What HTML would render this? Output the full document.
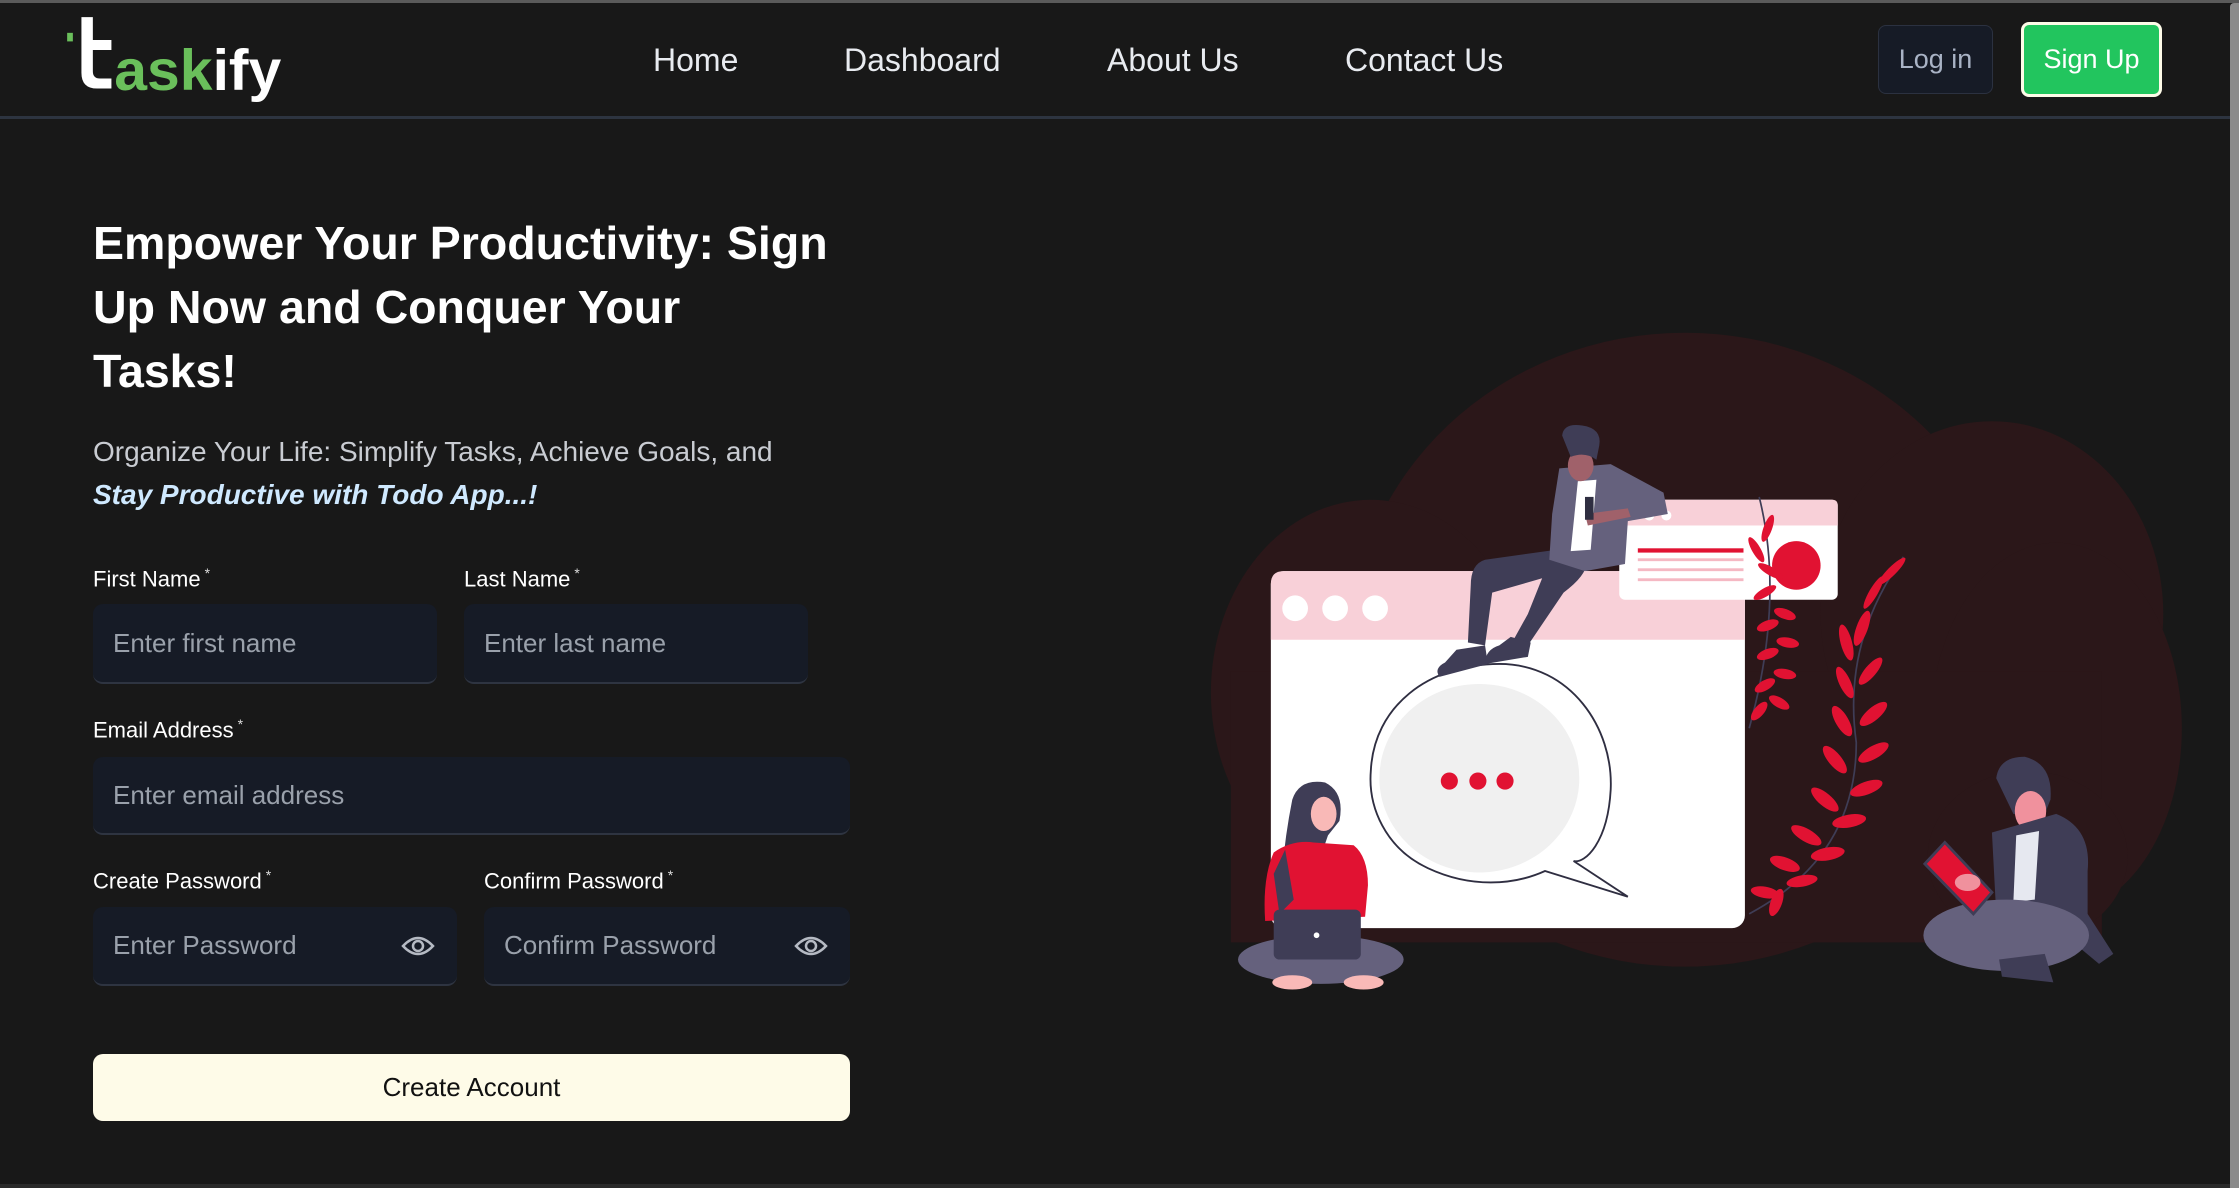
<!DOCTYPE html>
<html><head><meta charset="utf-8"><style>
*{margin:0;padding:0;box-sizing:border-box}
body{width:2239px;height:1188px;background:#181818;position:relative;overflow:hidden;font-family:"Liberation Sans",sans-serif;color:#fff}
.a{position:absolute}
.topline{left:0;top:0;width:2239px;height:3px;background:#5a5a5a}
.navb{left:0;top:116px;width:2230px;height:3px;background:#2d3440}
.sb{left:2230px;top:3px;width:9px;height:1185px;background:#8a8a8a;border-radius:4px 0 0 0}
.nav{top:42px;font-size:32px;color:#e8ebf0}
.btn{border-radius:8px;font-size:27px;display:flex;align-items:center;justify-content:center}
h1{position:absolute;left:93px;top:211px;font-size:46.5px;line-height:64px;font-weight:700;width:800px}
.sub{left:93px;top:430px;font-size:28px;line-height:43px;color:#c9ccd2}
.sub b{font-style:italic;color:#cfe9ff}
.lbl{font-size:22px;color:#fff}
.lbl sup{font-size:14px;color:#ddd;margin-left:4px}
.inp{background:#161b26;border-radius:10px;border-bottom:2px solid #2e3441;font-size:26px;color:#9aa1ab;padding-left:20px;display:flex;align-items:center}
.eye{position:absolute;right:22px;top:50%;margin-top:-15px}
</style></head><body>
<div class="a topline"></div>
<div class="a navb"></div>
<div class="a sb"></div>

<svg class="a" style="left:0;top:0" width="2239" height="1188" viewBox="0 0 1568 832">
<!-- logo -->
<rect x="47" y="23" width="4" height="6" fill="#6abf5b"/>
<path d="M57 12 H65 V28 H78 V35 H65 V50 Q65 55 70 55 H78 V62 H68 Q57 62 57 51 Z" fill="#fff"/>
<text x="80" y="63" font-family="Liberation Sans" font-weight="700" font-size="40" textLength="117" lengthAdjust="spacingAndGlyphs" fill="#6abf5b">ask<tspan fill="#fff">ify</tspan></text>

<!-- blob -->
<g fill="#2b1719">
<ellipse cx="1180" cy="455" rx="235" ry="222"/>
<ellipse cx="1395" cy="430" rx="120" ry="135"/>
<ellipse cx="1440" cy="510" rx="88" ry="130"/>
<ellipse cx="960" cy="485" rx="112" ry="135"/>
<rect x="862" y="470" width="610" height="190"/>
<ellipse cx="1420" cy="600" rx="70" ry="60"/>
</g>
<!-- main window -->
<rect x="890" y="400" width="332" height="250" rx="9" fill="#fff"/>
<path d="M899 400 H1213 Q1222 400 1222 409 V448 H890 V409 Q890 400 899 400Z" fill="#f8d0d8"/>
<circle cx="907" cy="426" r="9" fill="#fff"/><circle cx="935" cy="426" r="9" fill="#fff"/><circle cx="963" cy="426" r="9" fill="#fff"/>
<!-- small window -->
<rect x="1134" y="350" width="153" height="70" rx="4" fill="#fff"/>
<path d="M1138 350 H1283 Q1287 350 1287 354 V368 H1134 V354 Q1134 350 1138 350Z" fill="#f8d0d8"/>
<circle cx="1143" cy="361" r="3.5" fill="#fff"/><circle cx="1155" cy="361" r="3.5" fill="#fff"/><circle cx="1167" cy="361" r="3.5" fill="#fff"/>
<rect x="1147" y="384" width="74" height="3" fill="#e11232"/>
<rect x="1147" y="391" width="74" height="2" fill="#f5b8c3"/>
<rect x="1147" y="398" width="74" height="2" fill="#f5b8c3"/>
<rect x="1147" y="405" width="74" height="2" fill="#f5b8c3"/>
<circle cx="1258" cy="396" r="17" fill="#e11232"/>
<!-- bubble -->
<path d="M1050 465 C1100 465 1130 510 1128 553 C1126 590 1110 605 1102 603 L1140 628 L1082 610 C1060 620 1030 622 1000 608 C970 594 958 565 960 540 C962 495 1000 465 1050 465Z" fill="#fff" stroke="#2f2e41" stroke-width="1.3"/>
<ellipse cx="1036" cy="545" rx="70" ry="66" fill="#f0f0f0"/>
<circle cx="1015" cy="547" r="6" fill="#e11232"/><circle cx="1035" cy="547" r="6" fill="#e11232"/><circle cx="1054" cy="547" r="6" fill="#e11232"/>
<!-- vines -->
<g stroke="#3f3d56" stroke-width="1.2" fill="none">
<path d="M1232 348 Q1250 420 1225 510"/>
<path d="M1333 390 Q1290 450 1300 520 Q1300 600 1225 640"/>
</g>
<g fill="#e11232">
<ellipse cx="1238" cy="370" rx="3" ry="10" transform="rotate(20 1238 370)"/>
<ellipse cx="1230" cy="385" rx="3" ry="10" transform="rotate(-30 1230 385)"/>
<ellipse cx="1240" cy="400" rx="3" ry="10" transform="rotate(-60 1240 400)"/>
<ellipse cx="1236" cy="415" rx="3" ry="9" transform="rotate(60 1236 415)"/>
<ellipse cx="1250" cy="430" rx="3.5" ry="8" transform="rotate(-70 1250 430)"/>
<ellipse cx="1238" cy="438" rx="3.5" ry="8" transform="rotate(70 1238 438)"/>
<ellipse cx="1252" cy="450" rx="3.5" ry="8" transform="rotate(-80 1252 450)"/>
<ellipse cx="1238" cy="458" rx="3.5" ry="8" transform="rotate(70 1238 458)"/>
<ellipse cx="1250" cy="472" rx="3.5" ry="8" transform="rotate(-80 1250 472)"/>
<ellipse cx="1236" cy="480" rx="3.5" ry="8" transform="rotate(60 1236 480)"/>
<ellipse cx="1246" cy="492" rx="3.5" ry="8" transform="rotate(-60 1246 492)"/>
<ellipse cx="1232" cy="498" rx="3.5" ry="8" transform="rotate(40 1232 498)"/>
<ellipse cx="1325" cy="400" rx="3" ry="13" transform="rotate(45 1325 400)"/>
<ellipse cx="1312" cy="415" rx="3" ry="13" transform="rotate(30 1312 415)"/>
<ellipse cx="1304" cy="440" rx="4" ry="13" transform="rotate(20 1304 440)"/>
<ellipse cx="1293" cy="450" rx="4" ry="13" transform="rotate(-15 1293 450)"/>
<ellipse cx="1310" cy="470" rx="4" ry="12" transform="rotate(40 1310 470)"/>
<ellipse cx="1292" cy="478" rx="4" ry="12" transform="rotate(-25 1292 478)"/>
<ellipse cx="1312" cy="500" rx="4.5" ry="12" transform="rotate(50 1312 500)"/>
<ellipse cx="1290" cy="505" rx="4.5" ry="12" transform="rotate(-30 1290 505)"/>
<ellipse cx="1312" cy="527" rx="4.5" ry="12" transform="rotate(60 1312 527)"/>
<ellipse cx="1285" cy="532" rx="4.5" ry="12" transform="rotate(-40 1285 532)"/>
<ellipse cx="1307" cy="552" rx="4.5" ry="12" transform="rotate(70 1307 552)"/>
<ellipse cx="1278" cy="560" rx="4.5" ry="12" transform="rotate(-50 1278 560)"/>
<ellipse cx="1295" cy="575" rx="4.5" ry="12" transform="rotate(80 1295 575)"/>
<ellipse cx="1265" cy="585" rx="4.5" ry="12" transform="rotate(-60 1265 585)"/>
<ellipse cx="1280" cy="598" rx="4.5" ry="12" transform="rotate(80 1280 598)"/>
<ellipse cx="1250" cy="605" rx="4.5" ry="11" transform="rotate(-70 1250 605)"/>
<ellipse cx="1262" cy="617" rx="4" ry="11" transform="rotate(80 1262 617)"/>
<ellipse cx="1236" cy="625" rx="4" ry="10" transform="rotate(-80 1236 625)"/>
<ellipse cx="1244" cy="632" rx="4" ry="10" transform="rotate(20 1244 632)"/>
</g>
<!-- top man -->
<path d="M1090 385 L1040 392 Q1030 395 1030 410 L1028 450 L1040 452 L1045 415 L1080 405 L1070 430 L1060 448 L1070 452 L1095 415 Q1115 400 1110 390Z" fill="#3f3d56"/>
<path d="M1020 455 L1040 452 L1042 465 L1008 474 Q1004 468 1012 464Z" fill="#3f3d56"/>
<path d="M1058 446 L1072 450 L1070 460 L1040 465 Q1040 455 1050 452Z" fill="#3f3d56"/>
<path d="M1092 328 L1128 325 L1165 345 L1168 360 L1140 365 L1138 395 L1110 400 L1085 392 L1087 360Z" fill="#65617d"/>
<path d="M1105 337 L1118 336 L1114 385 L1100 386Z" fill="#fff"/>
<ellipse cx="1107" cy="326" rx="9" ry="11" fill="#a0616a"/>
<path d="M1094 305 Q1095 296 1108 298 Q1122 300 1120 312 L1118 322 Q1110 316 1100 320 Z" fill="#3f3d56"/>
<path d="M1110 360 L1140 356 L1142 362 L1112 368Z" fill="#a0616a"/>
<rect x="1110" y="348" width="6" height="16" fill="#2f2e41"/>
<!-- woman -->
<path d="M905 560 Q910 545 928 548 Q942 555 938 575 L930 585 L918 620 L905 628 L898 610 Q900 585 905 560Z" fill="#3f3d56"/>
<ellipse cx="927" cy="570" rx="9" ry="12" fill="#f9b9b7"/>
<path d="M892 597 Q905 588 920 590 L948 592 Q958 600 958 620 L956 642 L886 645 Q884 615 892 597Z" fill="#e11232"/>
<path d="M900 595 L906 630 L896 640 L892 612Z" fill="#3f3d56"/>
<ellipse cx="925" cy="672" rx="58" ry="17" fill="#65617d"/>
<ellipse cx="905" cy="688" rx="14" ry="5" fill="#f9b9b7"/><ellipse cx="955" cy="688" rx="14" ry="5" fill="#f9b9b7"/>
<rect x="892" y="637" width="61" height="35" rx="4" fill="#3f3d56"/>
<circle cx="922" cy="655" r="2" fill="#fff"/>
<!-- right man -->
<path d="M1398 545 Q1400 530 1418 530 Q1438 535 1436 560 L1430 575 L1410 570 Z" fill="#3f3d56"/>
<ellipse cx="1422" cy="568" rx="11" ry="14" fill="#f0919d"/>
<path d="M1395 583 L1440 570 Q1465 580 1462 610 L1462 640 L1480 668 L1470 675 L1440 650 L1398 640 Z" fill="#3f3d56"/>
<path d="M1412 585 L1428 582 L1425 630 L1410 632Z" fill="#e6e8f0"/>
<ellipse cx="1405" cy="655" rx="58" ry="25" fill="#65617d"/>
<path d="M1348 605 L1362 590 L1395 625 L1382 640Z" fill="#e11232" stroke="#3f3d56" stroke-width="2"/>
<ellipse cx="1378" cy="618" rx="9" ry="6" fill="#f0919d"/>
<path d="M1400 672 L1432 668 L1438 688 L1402 684Z" fill="#3f3d56"/>
</svg>

<div class="a nav" style="left:653px">Home</div>
<div class="a nav" style="left:844px">Dashboard</div>
<div class="a nav" style="left:1107px">About Us</div>
<div class="a nav" style="left:1345px">Contact Us</div>
<div class="a btn" style="left:1878px;top:25px;width:115px;height:69px;background:#161b26;border:1px solid #2b3140;color:#a9b3c5">Log in</div>
<div class="a btn" style="left:2021px;top:22px;width:141px;height:75px;background:#22c55e;border:3px solid #fefbe8;color:#fff">Sign Up</div>

<h1>Empower Your Productivity: Sign<br>Up Now and Conquer Your<br>Tasks!</h1>
<div class="a sub">Organize Your Life: Simplify Tasks, Achieve Goals, and<br><b>Stay Productive with Todo App...!</b></div>

<div class="a lbl" style="left:93px;top:565px">First Name<sup>*</sup></div>
<div class="a lbl" style="left:464px;top:565px">Last Name<sup>*</sup></div>
<div class="a inp" style="left:93px;top:604px;width:344px;height:80px">Enter first name</div>
<div class="a inp" style="left:464px;top:604px;width:344px;height:80px">Enter last name</div>
<div class="a lbl" style="left:93px;top:716px">Email Address<sup>*</sup></div>
<div class="a inp" style="left:93px;top:757px;width:757px;height:78px">Enter email address</div>
<div class="a lbl" style="left:93px;top:867px">Create Password<sup>*</sup></div>
<div class="a lbl" style="left:484px;top:867px">Confirm Password<sup>*</sup></div>
<div class="a inp" style="left:93px;top:907px;width:364px;height:79px">Enter Password
<svg class="eye" width="34" height="30" viewBox="0 0 34 30"><path d="M2 15 Q17 -1 32 15 Q17 31 2 15Z" fill="none" stroke="#b5bac3" stroke-width="2.5"/><circle cx="17" cy="15" r="5" fill="none" stroke="#b5bac3" stroke-width="2.5"/></svg></div>
<div class="a inp" style="left:484px;top:907px;width:366px;height:79px">Confirm Password
<svg class="eye" width="34" height="30" viewBox="0 0 34 30"><path d="M2 15 Q17 -1 32 15 Q17 31 2 15Z" fill="none" stroke="#b5bac3" stroke-width="2.5"/><circle cx="17" cy="15" r="5" fill="none" stroke="#b5bac3" stroke-width="2.5"/></svg></div>
<div class="a btn" style="left:93px;top:1054px;width:757px;height:67px;background:#fefbe8;color:#111;font-size:26px;border-radius:10px">Create Account</div>
<div class="a" style="left:0;top:1184px;width:2230px;height:4px;background:#2a2a2a"></div>
</body></html>
